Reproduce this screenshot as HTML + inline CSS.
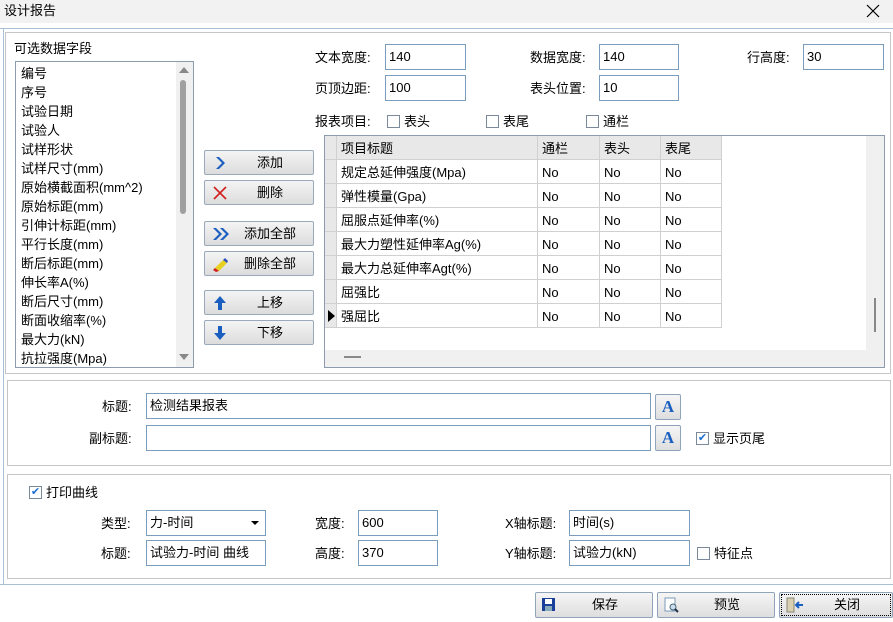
<!DOCTYPE html>
<html><head><meta charset="utf-8">
<style>
*{box-sizing:border-box;margin:0;padding:0}
body{width:893px;height:622px;background:#fff;font-family:"Liberation Sans","Noto Sans CJK SC",sans-serif;font-size:13px;color:#000;position:relative;overflow:hidden}
.a{position:absolute}
.inp{position:absolute;border:1px solid #7a9cbd;background:#fff;height:26px;line-height:24px;padding-left:3px;font-size:13px}
.lbl{position:absolute;font-size:13px;line-height:16px}
.btn{position:absolute;width:110px;height:25px;border:1px solid #9aaabb;border-radius:2px;background:linear-gradient(#f4f4f4,#dcdcdc);font-size:13px;line-height:23px;text-align:center;padding-left:22px}
.btn svg{position:absolute;left:7px;top:4px}
.cb{position:absolute;width:13px;height:13px;border:1px solid #7a8a9a;background:#fff}
.grid{position:absolute;left:324px;top:135px;width:561px;height:233px;border:1px solid #8c9cac;background:#fff;overflow:hidden}
.row{position:absolute;left:0;height:24px;width:397px}
.c{position:absolute;top:0;height:24px;line-height:25px;border-right:1px solid #d0d0d0;border-bottom:1px solid #d0d0d0;padding-left:4px}
.bb{position:absolute;height:26px;border:1px solid #8fa4bb;border-radius:2px;background:linear-gradient(#f6f6f6,#dedede);text-align:center;line-height:24px}
.bw{padding-left:22px}
</style></head><body>
<div class="a" style="left:0;top:0;width:893px;height:23px;background:#f2f2f2"></div>
<div class="lbl" style="left:4px;top:3px">设计报告</div>
<svg class="a" style="left:866px;top:4px" width="14" height="14"><path d="M1 1L13 13M13 1L1 13" stroke="#000" stroke-width="1.2"/></svg>
<div class="a" style="left:0;top:28px;width:893px;height:1px;background:#a9c0d6"></div>
<div class="a" style="left:3px;top:28px;width:1px;height:556px;background:#a9c0d6"></div>
<div class="a" style="left:5px;top:32px;width:886px;height:342px;border:1px solid #c6c6c6"></div>

<div class="lbl" style="left:14px;top:41px">可选数据字段</div>
<div class="a" style="left:15px;top:61px;width:179px;height:307px;border:1px solid #8c9cac;background:#fff"></div>
<div class="a" style="left:21px;top:64px;line-height:19px">编号<br>序号<br>试验日期<br>试验人<br>试样形状<br>试样尺寸(mm)<br>原始横截面积(mm^2)<br>原始标距(mm)<br>引伸计标距(mm)<br>平行长度(mm)<br>断后标距(mm)<br>伸长率A(%)<br>断后尺寸(mm)<br>断面收缩率(%)<br>最大力(kN)<br>抗拉强度(Mpa)</div>
<div class="a" style="left:176px;top:62px;width:17px;height:305px;background:#f0f0f0"></div>
<div class="a" style="left:179px;top:67px;width:0;height:0;border-left:5px solid transparent;border-right:5px solid transparent;border-bottom:6px solid #888"></div>
<div class="a" style="left:179px;top:354px;width:0;height:0;border-left:5px solid transparent;border-right:5px solid transparent;border-top:6px solid #888"></div>
<div class="a" style="left:180px;top:80px;width:6px;height:134px;background:#a0a0a0;border-radius:3px"></div>

<div class="btn" style="left:204px;top:150px"><svg width="16" height="16"><path d="M4 2l6 6-6 6h3l6-6-6-6z" fill="#1a5fc0"/></svg>添加</div>
<div class="btn" style="left:204px;top:180px"><svg width="16" height="16"><path d="M2 2L14 14M14 2L2 14" stroke="#d02020" stroke-width="1.6"/></svg>删除</div>
<div class="btn" style="left:204px;top:221px"><svg width="20" height="16"><path d="M1 2l6 6-6 6h3l6-6-6-6zM8 2l6 6-6 6h3l6-6-6-6z" fill="#1a5fc0"/></svg>添加全部</div>
<div class="btn" style="left:204px;top:251px"><svg width="18" height="16"><path d="M3 12l8-8 4 3-8 8z" fill="#e8d020"/><path d="M3 12l4 3-3 1-3-2z" fill="#d02020"/><path d="M11 4l2-2 3 3-1 2z" fill="#3050c0"/></svg>删除全部</div>
<div class="btn" style="left:204px;top:290px"><svg width="16" height="16"><path d="M8 1l6 7h-4v7H6V8H2z" fill="#1a5fc0"/></svg>上移</div>
<div class="btn" style="left:204px;top:320px"><svg width="16" height="16"><path d="M8 15l6-7h-4V1H6v7H2z" fill="#1a5fc0"/></svg>下移</div>

<div class="lbl" style="left:315px;top:50px">文本宽度:</div>
<div class="inp" style="left:385px;top:44px;width:81px">140</div>
<div class="lbl" style="left:530px;top:50px">数据宽度:</div>
<div class="inp" style="left:599px;top:44px;width:80px">140</div>
<div class="lbl" style="left:747px;top:50px">行高度:</div>
<div class="inp" style="left:803px;top:44px;width:81px">30</div>
<div class="lbl" style="left:315px;top:81px">页顶边距:</div>
<div class="inp" style="left:385px;top:75px;width:81px">100</div>
<div class="lbl" style="left:530px;top:81px">表头位置:</div>
<div class="inp" style="left:599px;top:75px;width:80px">10</div>
<div class="lbl" style="left:315px;top:114px">报表项目:</div>
<div class="cb" style="left:387px;top:115px"></div><div class="lbl" style="left:404px;top:114px">表头</div>
<div class="cb" style="left:486px;top:115px"></div><div class="lbl" style="left:503px;top:114px">表尾</div>
<div class="cb" style="left:586px;top:115px"></div><div class="lbl" style="left:603px;top:114px">通栏</div>

<div class="grid">
<div class="row" style="top:0;background:#e8e8e8"><div class="c" style="left:0;width:12px;padding:0"></div><div class="c" style="left:12px;width:201px">项目标题</div><div class="c" style="left:213px;width:62px">通栏</div><div class="c" style="left:275px;width:61px">表头</div><div class="c" style="left:336px;width:61px">表尾</div></div>
<div class="row" style="top:24px"><div class="c" style="left:0;width:12px;background:#e8e8e8"></div><div class="c" style="left:12px;width:201px">规定总延伸强度(Mpa)</div><div class="c" style="left:213px;width:62px">No</div><div class="c" style="left:275px;width:61px">No</div><div class="c" style="left:336px;width:61px">No</div></div>
<div class="row" style="top:48px"><div class="c" style="left:0;width:12px;background:#e8e8e8"></div><div class="c" style="left:12px;width:201px">弹性模量(Gpa)</div><div class="c" style="left:213px;width:62px">No</div><div class="c" style="left:275px;width:61px">No</div><div class="c" style="left:336px;width:61px">No</div></div>
<div class="row" style="top:72px"><div class="c" style="left:0;width:12px;background:#e8e8e8"></div><div class="c" style="left:12px;width:201px">屈服点延伸率(%)</div><div class="c" style="left:213px;width:62px">No</div><div class="c" style="left:275px;width:61px">No</div><div class="c" style="left:336px;width:61px">No</div></div>
<div class="row" style="top:96px"><div class="c" style="left:0;width:12px;background:#e8e8e8"></div><div class="c" style="left:12px;width:201px">最大力塑性延伸率Ag(%)</div><div class="c" style="left:213px;width:62px">No</div><div class="c" style="left:275px;width:61px">No</div><div class="c" style="left:336px;width:61px">No</div></div>
<div class="row" style="top:120px"><div class="c" style="left:0;width:12px;background:#e8e8e8"></div><div class="c" style="left:12px;width:201px">最大力总延伸率Agt(%)</div><div class="c" style="left:213px;width:62px">No</div><div class="c" style="left:275px;width:61px">No</div><div class="c" style="left:336px;width:61px">No</div></div>
<div class="row" style="top:144px"><div class="c" style="left:0;width:12px;background:#e8e8e8"></div><div class="c" style="left:12px;width:201px">屈强比</div><div class="c" style="left:213px;width:62px">No</div><div class="c" style="left:275px;width:61px">No</div><div class="c" style="left:336px;width:61px">No</div></div>
<div class="row" style="top:168px"><div class="c" style="left:0;width:12px;background:#e8e8e8"></div><div class="a" style="left:3px;top:6px;width:0;height:0;border-top:6px solid transparent;border-bottom:6px solid transparent;border-left:7px solid #000"></div><div class="c" style="left:12px;width:201px">强屈比</div><div class="c" style="left:213px;width:62px">No</div><div class="c" style="left:275px;width:61px">No</div><div class="c" style="left:336px;width:61px">No</div></div>
<div class="a" style="left:0;top:214px;width:560px;height:20px;background:#f0f0f0"></div>
<div class="a" style="left:19px;top:220px;width:17px;height:2px;background:#888"></div>
<div class="a" style="left:541px;top:0;width:18px;height:232px;background:#f0f0f0"></div>
<div class="a" style="left:549px;top:162px;width:2px;height:34px;background:#888"></div>
</div>

<div class="a" style="left:7px;top:380px;width:884px;height:86px;border:1px solid #c6c6c6"></div>
<div class="lbl" style="left:102px;top:399px">标题:</div>
<div class="inp" style="left:146px;top:393px;width:505px">检测结果报表</div>
<div class="bb" style="left:655px;top:394px;width:26px;padding:0"><span style="color:#1a5fc0;font-family:'Liberation Serif',serif;font-weight:bold;font-size:17px">A</span></div>
<div class="lbl" style="left:89px;top:431px">副标题:</div>
<div class="inp" style="left:146px;top:425px;width:505px"></div>
<div class="bb" style="left:655px;top:425px;width:26px;padding:0"><span style="color:#1a5fc0;font-family:'Liberation Serif',serif;font-weight:bold;font-size:17px">A</span></div>
<div class="cb" style="left:696px;top:432px;color:#1a6fd0;font-size:11px;line-height:11px;text-align:center">✔</div>
<div class="lbl" style="left:713px;top:431px">显示页尾</div>

<div class="a" style="left:7px;top:474px;width:884px;height:105px;border:1px solid #c6c6c6"></div>
<div class="cb" style="left:29px;top:486px;color:#1a6fd0;font-size:11px;line-height:11px;text-align:center">✔</div>
<div class="lbl" style="left:46px;top:485px">打印曲线</div>
<div class="lbl" style="left:101px;top:516px">类型:</div>
<div class="inp" style="left:146px;top:510px;width:120px">力-时间</div>
<div class="a" style="left:251px;top:521px;border-left:4px solid transparent;border-right:4px solid transparent;border-top:4px solid #000"></div>
<div class="lbl" style="left:101px;top:546px">标题:</div>
<div class="inp" style="left:146px;top:540px;width:120px">试验力-时间 曲线</div>
<div class="lbl" style="left:315px;top:516px">宽度:</div>
<div class="inp" style="left:358px;top:510px;width:80px">600</div>
<div class="lbl" style="left:315px;top:546px">高度:</div>
<div class="inp" style="left:358px;top:540px;width:80px">370</div>
<div class="lbl" style="left:505px;top:516px">X轴标题:</div>
<div class="inp" style="left:569px;top:510px;width:121px">时间(s)</div>
<div class="lbl" style="left:505px;top:546px">Y轴标题:</div>
<div class="inp" style="left:569px;top:540px;width:121px">试验力(kN)</div>
<div class="cb" style="left:697px;top:547px"></div>
<div class="lbl" style="left:714px;top:546px">特征点</div>

<div class="a" style="left:0;top:584px;width:893px;height:1px;background:#a9c0d6"></div>
<div class="bb bw" style="left:535px;top:592px;width:118px"><svg class="a" style="left:6px;top:5px" width="14" height="14"><rect x="0" y="0" width="13" height="13" fill="#1a3f9a"/><rect x="3" y="1" width="7" height="5" fill="#fff"/><rect x="3" y="8" width="7" height="5" fill="#8ab"/></svg>保存</div>
<div class="bb bw" style="left:657px;top:592px;width:118px"><svg class="a" style="left:6px;top:4px" width="16" height="16"><rect x="1" y="1" width="10" height="13" fill="#fff" stroke="#7a9ab8"/><circle cx="9" cy="10" r="3" fill="#cde" stroke="#467"/><path d="M11 12l3 3" stroke="#234" stroke-width="2"/></svg>预览</div>
<div class="bb bw" style="left:779px;top:592px;width:114px;outline:1px dotted #000;outline-offset:-3px"><svg class="a" style="left:6px;top:4px" width="18" height="16"><rect x="1" y="1" width="7" height="14" fill="#d8d0b0" stroke="#887"/><path d="M17 8h-6M13 5l-3 3 3 3" stroke="#1a5fc0" stroke-width="2" fill="none"/></svg>关闭</div>
</body></html>
